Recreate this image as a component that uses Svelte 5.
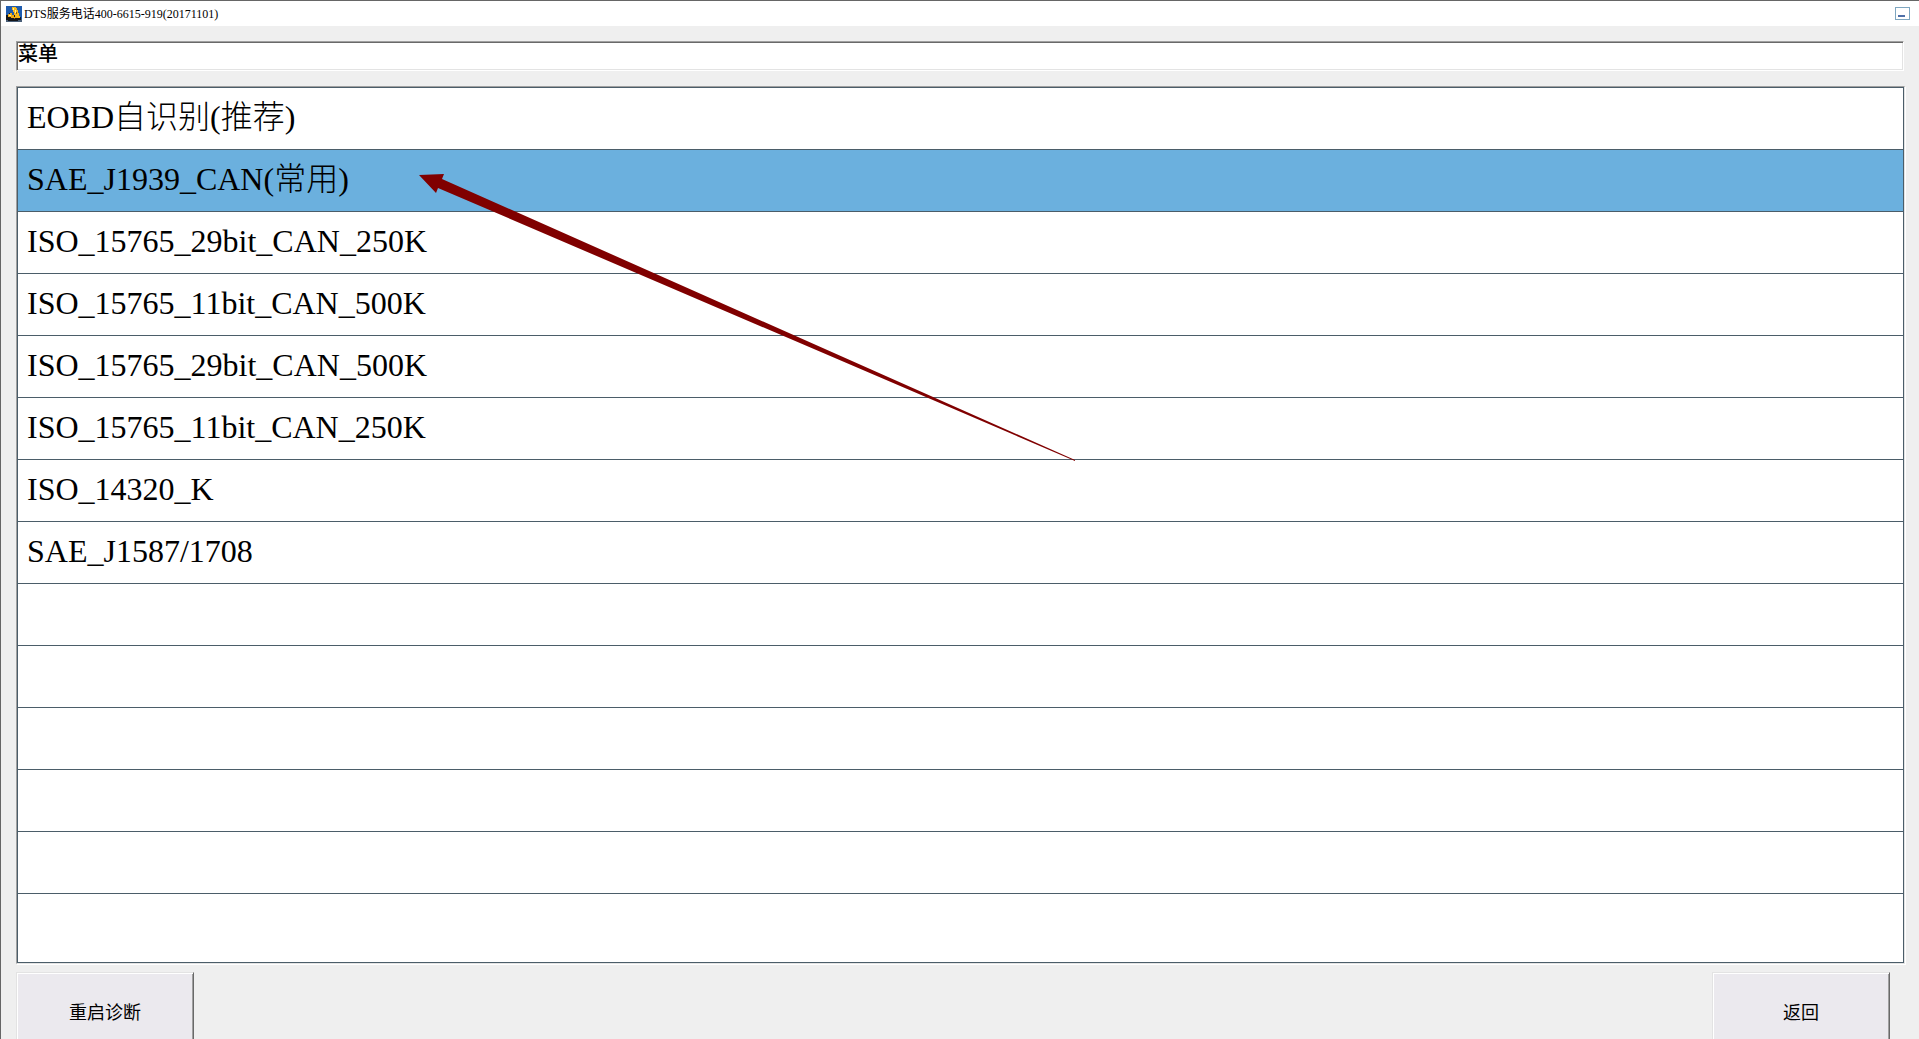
<script lang="ts">
  const ROW_COUNT = 14;

  const items = [
    'EOBD自识别(推荐)',
    'SAE_J1939_CAN(常用)',
    'ISO_15765_29bit_CAN_250K',
    'ISO_15765_11bit_CAN_500K',
    'ISO_15765_29bit_CAN_500K',
    'ISO_15765_11bit_CAN_250K',
    'ISO_14320_K',
    'SAE_J1587/1708'
  ];

  // Pad with empty rows so the grid lines fill the list
  const rows = Array.from({ length: ROW_COUNT }, (_, i) => items[i] ?? '');

  let selected = $state(1);
</script>

<div class="window">
  <header class="titlebar">
    <svg class="logo" width="16" height="16" viewBox="0 0 16 16" aria-hidden="true" shape-rendering="crispEdges">
      <rect width="16" height="16" fill="#1f5cae" />
      <rect y="13" width="16" height="3" fill="#4a5f78" />
      <path d="M0 9h3V7h3v2h3v2h6v3h-3v1H2v-1H0z" fill="#14161a" />
      <path d="M6 1h4v1h1v2h1v3h1v3h1v2h-3v-1H9V9H8V6H7V4H6z" fill="#f6b91c" />
      <path d="M2 8h2V7h2v2h2v2h3v1H5v-1H2z" fill="#eeaa14" />
      <path d="M7 2h1v2H7zM9 4h1v3H9zM3 9h2v1H3z" fill="#fff0a0" />
      <path d="M10 6h1v2h-1zM8 12h1v1H8z" fill="#8a5a10" />
    </svg>
    <h1>DTS服务电话400-6615-919(20171101)</h1>
    <button class="minimize" aria-label="最小化"></button>
  </header>

  <main>
    <div class="path">菜单</div>

    <div class="list-frame">
      <ul class="list">
        {#each rows as label, i}
          <li>
            {#if label}
              <button class="row" class:selected={selected === i} onclick={() => selected = i}>{label}</button>
            {/if}
          </li>
        {/each}
      </ul>
      <svg class="arrow" width="658" height="290" viewBox="0 0 658 290" aria-hidden="true">
        <path d="M0 1L25 0L23 5L656 286L656 287L19 14L17 19Z" fill="#800000" />
      </svg>
    </div>

    <footer>
      <button class="action">重启诊断</button>
      <button class="action">返回</button>
    </footer>
  </main>
</div>

<style>
  :global(body) {
    margin: 0;
  }

  .window {
    box-sizing: border-box;
    display: flex;
    flex-direction: column;
    height: 100vh;
    overflow: hidden;
    border-top: 1px solid #666;
    border-left: 1px solid #666;
    background: #efefef;
    color: #000;
    font-family: 'Liberation Serif', 'Noto Sans CJK SC', serif;
  }

  button {
    font-family: inherit;
    color: inherit;
    border-radius: 0;
  }

  .titlebar {
    display: flex;
    align-items: center;
    height: 25px;
    padding: 0 9px 0 5px;
    background: #fff;
  }

  .logo {
    margin-right: 2px;
  }

  h1 {
    margin: 0;
    font-size: 12px;
    font-weight: 400;
    line-height: 16px;
  }

  .minimize {
    display: flex;
    align-items: flex-end;
    width: 15px;
    height: 13px;
    margin-left: auto;
    padding: 2px;
    border: 1px solid #7ea6c0;
    background: #fff;
  }

  .minimize::before {
    content: '';
    width: 7px;
    height: 2px;
    background: #4f6fa8;
  }

  main {
    display: flex;
    flex: 1;
    flex-direction: column;
    min-height: 0;
    padding: 15px 14px 0 15px;
  }

  .path {
    box-sizing: border-box;
    height: 30px;
    margin-right: 1px;
    padding-left: 1px;
    border: 1px solid;
    border-color: #a0a0a0 #fff #fff #a0a0a0;
    box-shadow: inset 1px 1px #696969, inset -1px -1px #e3e3e3;
    background: #fff;
    font-size: 20px;
    font-weight: 500;
    line-height: 24px;
  }

  .list-frame {
    position: relative;
    display: flex;
    flex: 1;
    min-height: 0;
    margin-top: 15px;
    border: 1px solid;
    border-color: #a0a0a0 #e3e3e3 #e3e3e3 #a0a0a0;
    box-shadow: 1px 1px #fff;
  }

  .list {
    display: flex;
    flex: 1;
    flex-direction: column;
    margin: 0;
    padding: 0;
    border: 1px solid #4b5d69;
    background: #fff;
    list-style: none;
  }

  li {
    display: flex;
    height: 61px;
    border-bottom: 1px solid #4b5d69;
  }

  li:last-child {
    flex: 1;
    border-bottom: none;
  }

  .row {
    flex: 1;
    padding: 0 9px 3px;
    border: none;
    background: none;
    font-size: 32px;
    font-weight: 300;
    line-height: 58px;
    text-align: left;
  }

  .row.selected {
    background: #6bb0de;
  }

  .arrow {
    position: absolute;
    top: 87px;
    left: 402px;
    pointer-events: none;
  }

  footer {
    display: flex;
    flex-shrink: 0;
    justify-content: space-between;
    height: 67px;
    margin-top: 8px;
    padding-right: 15px;
  }

  .action {
    width: 178px;
    height: 82px;
    padding-bottom: 6px;
    border: 1px solid;
    border-color: #e3e3e3 #696969 #696969 #e3e3e3;
    box-shadow: inset 1px 1px #fff, inset -1px -1px #a0a0a0;
    background: #ebe9ee;
    font-size: 18px;
  }
</style>
